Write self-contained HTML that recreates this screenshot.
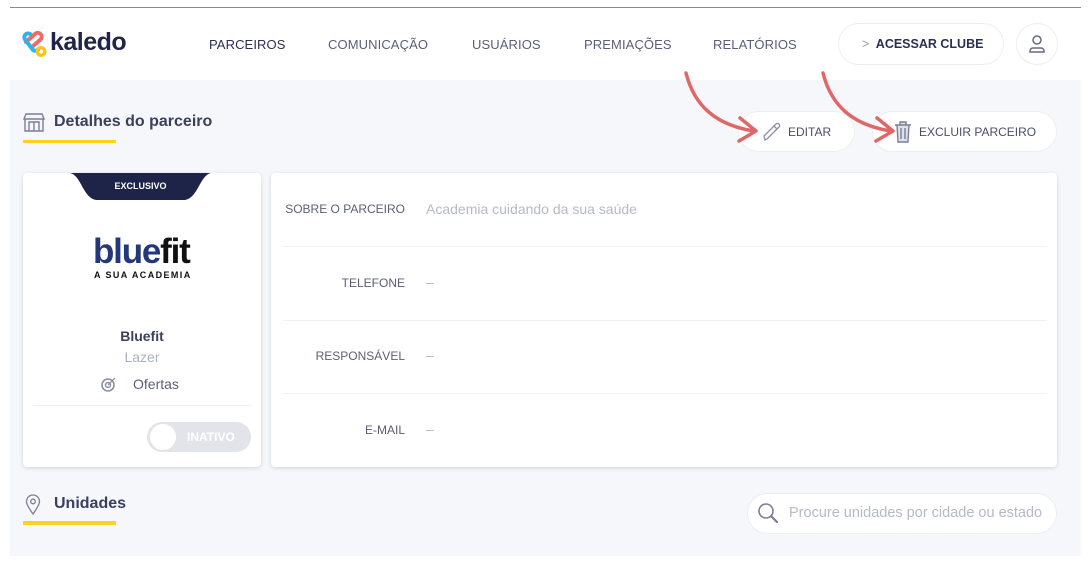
<!DOCTYPE html>
<html><head><meta charset="utf-8">
<style>
*{margin:0;padding:0;box-sizing:border-box}
body{width:1092px;height:564px;background:#fff;position:relative;overflow:hidden;font-family:"Liberation Sans",sans-serif;color:#3a3f5c}
.abs{position:absolute}
.nav{position:absolute;top:37px;font-size:13px;color:#5a5f78;letter-spacing:.1px}
.pill{position:absolute;background:#fff;border:1px solid #eceef3;border-radius:22px}
.card{position:absolute;background:#fff;border-radius:4px;box-shadow:0 1px 4px rgba(0,0,0,.15)}
.lbl{position:absolute;font-size:12px;color:#5b6076;text-align:right;width:140px}
.val{position:absolute;left:426px;color:#b6b9c6;font-size:14px}
.hr{position:absolute;left:283px;width:764px;height:1px;background:#eef0f4}
</style></head><body>
<div class="abs" style="left:10px;top:7px;width:1071px;height:1px;background:#8a8a8a"></div>
<!-- logo -->
<svg class="abs" style="left:22px;top:31px" width="25" height="27" viewBox="0 0 25 27">
<path d="M4 11 L13 3 a3.8 3.8 0 0 1 5.5 5.5 L10 16" stroke="#f06a6a" stroke-width="4" fill="none" stroke-linecap="round"/>
<path d="M8 3 a3.8 3.8 0 0 0-5 5.5 L11 19 a3.8 3.8 0 0 0 5.5 -1" stroke="#2bb5e8" stroke-width="4" fill="none" stroke-linecap="round"/>
<circle cx="19" cy="20.5" r="3.8" stroke="#fcc419" stroke-width="3.4" fill="none"/>
</svg>
<div class="abs" style="left:50px;top:28px;font-size:25px;font-weight:bold;color:#1f2547;letter-spacing:-.5px">kaledo</div>
<div class="nav" style="left:209px;color:#2b3050">PARCEIROS</div>
<div class="nav" style="left:328px">COMUNICAÇÃO</div>
<div class="nav" style="left:472px">USUÁRIOS</div>
<div class="nav" style="left:584px">PREMIAÇÕES</div>
<div class="nav" style="left:713px">RELATÓRIOS</div>
<div class="pill" style="left:838px;top:23px;width:166px;height:42px"></div>
<div class="abs" style="left:862px;top:37px;font-size:12.5px;font-weight:bold;color:#2b3050"><span style="color:#999;font-weight:normal">&gt;</span>&nbsp; ACESSAR CLUBE</div>
<div class="pill" style="left:1016px;top:23px;width:42px;height:42px;border-radius:50%"></div>
<svg class="abs" style="left:1028px;top:34px" width="18" height="20" viewBox="0 0 18 20"><circle cx="9" cy="6" r="4" fill="none" stroke="#666a80" stroke-width="1.5"/><path d="M2 18 v-1 a3 3 0 0 1 3-3 h8 a3 3 0 0 1 3 3 v1 z" fill="none" stroke="#666a80" stroke-width="1.5"/></svg>
<!-- gray area -->
<div class="abs" style="left:10px;top:80px;width:1071px;height:476px;background:#f6f7fb"></div>
<svg class="abs" style="left:23px;top:113px" width="22" height="19" viewBox="0 0 22 19"><path d="M3 1 h16 l2 5 h-20 z M2 6 v12 h18 v-12 M6 18 v-9 h10 v9 M11 9 v9" fill="none" stroke="#7a7f95" stroke-width="1.4"/></svg>
<div class="abs" style="left:54px;top:113px;font-size:16px;font-weight:bold;color:#3a3f5c">Detalhes do parceiro</div>
<div class="abs" style="left:23px;top:140px;width:93px;height:3px;background:#ffd21f"></div>
<div class="pill" style="left:738px;top:111px;width:117px;height:41px"></div>
<svg class="abs" style="left:762px;top:121px" width="20" height="21" viewBox="0 0 20 21"><path d="M3 19 L2 15 L14 3 a2 2 0 0 1 3 3 L5 18 z M12 5 l3 3" fill="none" stroke="#8a8ea3" stroke-width="1.3"/></svg>
<div class="abs" style="left:788px;top:125px;font-size:12px;color:#4a4f68">EDITAR</div>
<div class="pill" style="left:872px;top:111px;width:185px;height:41px"></div>
<svg class="abs" style="left:894px;top:120px" width="18" height="23" viewBox="0 0 18 23"><path d="M1 5 h16 M6 5 v-3 h6 v3 M3 5 l1 17 h10 l1-17 M7 8 v11 M11 8 v11" fill="#dfe1e8" stroke="#7a7f95" stroke-width="1.4"/></svg>
<div class="abs" style="left:919px;top:125px;font-size:12px;color:#4a4f68">EXCLUIR PARCEIRO</div>
<!-- arrows -->
<svg class="abs" style="left:0;top:0" width="1092" height="564"><g fill="none" stroke="#e06767" stroke-width="3.5" stroke-linecap="round" stroke-linejoin="round"><path d="M686 73 C694 105 715 125 754 131"/><path d="M740 118 L756 131 L739 141"/><path d="M823 73 C831 105 852 125 891 131"/><path d="M877 118 L893 131 L876 141"/></g></svg>
<!-- left card -->
<div class="card" style="left:23px;top:173px;width:238px;height:294px"></div>
<svg class="abs" style="left:70px;top:173px" width="141" height="27" viewBox="0 0 141 27"><path d="M0 0 H141 C130 2 128 25 115 27 H26 C13 25 11 2 0 0z" fill="#1e2448"/></svg>
<div class="abs" style="left:70px;top:181px;width:141px;text-align:center;font-size:9px;font-weight:bold;color:#fff">EXCLUSIVO</div>
<div class="abs" style="left:93px;top:233px;font-size:35px;font-weight:bold;letter-spacing:-1.2px;line-height:37px;color:#24377a">blue<span style="color:#111">fit</span></div>
<div class="abs" style="left:94px;top:270px;font-size:9px;font-weight:bold;letter-spacing:1.4px;color:#111">A SUA ACADEMIA</div>
<div class="abs" style="left:23px;top:328px;width:238px;text-align:center;font-size:14px;font-weight:bold;color:#3a3f5c">Bluefit</div>
<div class="abs" style="left:23px;top:349px;width:238px;text-align:center;font-size:14px;color:#aab0c0">Lazer</div>
<svg class="abs" style="left:101px;top:376px" width="16" height="16" viewBox="0 0 16 16"><circle cx="7" cy="9" r="6" fill="none" stroke="#8a8ea3" stroke-width="1.6"/><circle cx="7" cy="9" r="2.5" fill="none" stroke="#8a8ea3" stroke-width="1.5"/><path d="M7 9 L14 2" stroke="#8a8ea3" stroke-width="1.2"/></svg>
<div class="abs" style="left:133px;top:376px;font-size:14px;color:#5a5f78">Ofertas</div>
<div class="abs" style="left:33px;top:405px;width:218px;height:1px;background:#eef0f4"></div>
<div class="abs" style="left:147px;top:422px;width:104px;height:30px;border-radius:15px;background:#e3e4e9"></div>
<div class="abs" style="left:150px;top:424px;width:26px;height:26px;border-radius:50%;background:#fff"></div>
<div class="abs" style="left:187px;top:430px;font-size:12px;font-weight:bold;color:#fff">INATIVO</div>
<!-- right card -->
<div class="card" style="left:271px;top:173px;width:786px;height:294px"></div>
<div class="lbl" style="left:265px;top:202px">SOBRE O PARCEIRO</div>
<div class="val" style="top:201px">Academia cuidando da sua saúde</div>
<div class="hr" style="top:246px"></div>
<div class="lbl" style="left:265px;top:276px">TELEFONE</div><div class="val" style="top:274px">–</div>
<div class="hr" style="top:320px"></div>
<div class="lbl" style="left:265px;top:349px">RESPONSÁVEL</div><div class="val" style="top:347px">–</div>
<div class="hr" style="top:393px"></div>
<div class="lbl" style="left:265px;top:423px">E-MAIL</div><div class="val" style="top:421px">–</div>
<!-- unidades -->
<svg class="abs" style="left:25px;top:494px" width="16" height="21" viewBox="0 0 16 21"><path d="M8 20 C3 13 1.5 10 1.5 7.5 a6.5 6.5 0 0 1 13 0 C14.5 10 13 13 8 20z" fill="none" stroke="#7a7f95" stroke-width="1.3"/><circle cx="8" cy="7.5" r="2.3" fill="none" stroke="#7a7f95" stroke-width="1.3"/></svg>
<div class="abs" style="left:54px;top:495px;font-size:16px;font-weight:bold;color:#3a3f5c">Unidades</div>
<div class="abs" style="left:23px;top:521px;width:93px;height:4px;background:#ffd21f"></div>
<div class="pill" style="left:747px;top:493px;width:310px;height:41px;border-radius:21px"></div>
<svg class="abs" style="left:757px;top:502px" width="22" height="22" viewBox="0 0 22 22"><circle cx="9" cy="9" r="7" fill="none" stroke="#7a7f95" stroke-width="1.6"/><path d="M14 14 L20 20" stroke="#7a7f95" stroke-width="2.2" stroke-linecap="round"/></svg>
<div class="abs" style="left:789px;top:505px;font-size:14.5px;color:#b6b9c6">Procure unidades por cidade ou estado</div>
</body></html>
